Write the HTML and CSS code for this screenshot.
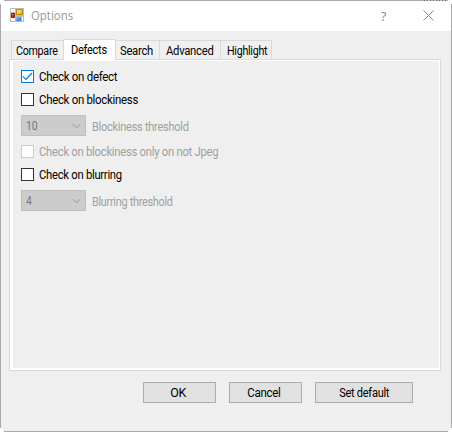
FILE: index.html
```html
<!DOCTYPE html>
<html lang="en">
<head>
<meta charset="utf-8">
<title>Options</title>
<link rel="stylesheet" href="styles.css">
</head>
<body>
<div class="window">
  <header class="titlebar">
    <svg class="app-icon" width="14" height="14" viewBox="0 0 14 14">
      <defs>
        <linearGradient id="y" x1="0" y1="0" x2="1" y2="1"><stop offset="0" stop-color="#ffe99b"/><stop offset="1" stop-color="#eda800"/></linearGradient>
        <linearGradient id="b" x1="0" y1="0" x2="1" y2="1"><stop offset="0" stop-color="#8dbbf5"/><stop offset="1" stop-color="#2d6bd0"/></linearGradient>
      </defs>
      <path d="M0 0H14V14H0Z" fill="#bdbdbd"/>
      <path d="M1 1H5V4H1ZM1 10H5V13H1ZM12 9H13V13H12Z" fill="#fff"/>
      <path d="M1.5 5.5H4.5V9.5H1.5Z" fill="#c8321f" stroke="#a01208"/>
      <path d="M6.5 1.5H12.5V6.5H6.5Z" fill="url(#y)" stroke="#b8860b"/>
      <path d="M6 9H11V13H6Z" fill="url(#b)"/>
      <path d="M2 6H3V7H2Z" fill="#f4a092"/>
    </svg>
    <h1 class="title">Options</h1>
    <span class="help">?</span>
    <svg class="close" width="11" height="11" viewBox="0 0 11 11"><path d="M.5 .5L10.5 10.5M10.5 .5L.5 10.5" fill="none" stroke="#888"/></svg>
  </header>
  <main class="body">
    <nav class="tabs">
      <span class="tab compare"><b class="t1">Compare</b></span>
      <span class="tab active"><b class="t2">Defects</b></span>
      <span class="tab search"><b class="t3">Search</b></span>
      <span class="tab advanced"><b class="t4">Advanced</b></span>
      <span class="tab highlight"><b class="t5">Highlight</b></span>
    </nav>
    <section class="panel">
      <div class="page">
        <label class="check on"><i class="box"><svg width="11" height="11" viewBox="0 0 11 11"><path d="M.8 5.3L4 8.5L10 2" fill="none" stroke="#0078d7" stroke-width="1.2"/></svg></i><span class="c1">Check on defect</span></label>
        <label class="check"><i class="box"></i><span class="c2">Check on blockiness</span></label>
        <div class="row"><span class="combo"><b class="value">10</b><svg width="9" height="6" viewBox="0 0 9 6"><path d="M.5 .8L4.5 4.8L8.5 .8" fill="none" stroke="#999"/></svg></span><span class="hint c3">Blockiness threshold</span></div>
        <label class="check disabled"><i class="box"></i><span class="c4">Check on blockiness only on not Jpeg</span></label>
        <label class="check"><i class="box"></i><span class="c5">Check on blurring</span></label>
        <div class="row"><span class="combo"><b class="value">4</b><svg width="9" height="6" viewBox="0 0 9 6"><path d="M.5 .8L4.5 4.8L8.5 .8" fill="none" stroke="#999"/></svg></span><span class="hint c6">Blurring threshold</span></div>
      </div>
    </section>
    <footer class="actions">
      <button><b class="ok">OK</b></button>
      <button><b class="cancel">Cancel</b></button>
      <button class="wide"><b class="default">Set default</b></button>
    </footer>
  </main>
</div>
</body>
</html>
```
FILE: styles.css
```css
* { box-sizing: border-box; }
body { margin: 0; background: #fff; font: 12px/14px Roboto, sans-serif; color: #000; letter-spacing: -0.3px; }
b, i { font-weight: inherit; font-style: normal; }
b, .check span, .hint { display: inline-block; white-space: nowrap; transform-origin: 0 50%; }
.window {
  width: 452px; height: 432px; padding: 1px;
  background:
    repeating-linear-gradient(90deg, #76685c 0 1px, #b9b3b0 1px 3px, #666a8c 3px 4px, #c9c2b8 4px 6px) 424px 0 / 23px 1px no-repeat,
    linear-gradient(#a9a9a9, #a9a9a9) 4px 0 / 444px 1px no-repeat,
    linear-gradient(#a9a9a9, #a9a9a9) 4px 431px / 444px 1px no-repeat,
    linear-gradient(#a9a9a9, #a9a9a9) 0 4px / 1px 424px no-repeat,
    linear-gradient(#a9a9a9, #a9a9a9) 451px 4px / 1px 424px no-repeat,
    #fff;
}
.titlebar { display: flex; height: 30px; background: #fff; padding: 7px 17px 0 9px; }
.app-icon { display: block; }
.title { margin: 1px auto 0 6.5px; font: 12px/14px "Open Sans", sans-serif; letter-spacing: 0; color: #999; transform: scaleX(.95); transform-origin: 0 50%; }
.help { margin-right: 37px; font: 13px/16px "Open Sans", sans-serif; color: #888; }
.close { margin-top: 2px; }
.body { height: 400px; padding: 8px 10px 0 8px; background: #efefef; border-radius: 0 0 3px 3px; }
.tabs { display: flex; align-items: flex-end; height: 21px; padding-left: 2px; position: relative; z-index: 1; }
.tab { height: 19px; margin-bottom: 1px; border: 1px solid #d9d9d9; border-bottom: 0; border-left-width: 0; background: #f0f0f0; padding: 3px 0 0 4px; white-space: nowrap; }
.compare { width: 52px; border-left-width: 1px; border-right: 0; }
.active { width: 53px; height: 21px; margin-bottom: 0; border-left-width: 1px; background: #fff; padding: 3px 0 0 7px; }
.search { width: 44px; }
.advanced { width: 61px; padding-left: 6px; }
.highlight { width: 51px; padding-left: 6px; }
.panel { width: 432px; height: 312px; margin-top: -1px; border: 1px solid #d9d9d9; background: #fff; padding: 1px 1px 2px 3px; }
.page { height: 307px; background: #efefef; padding: 9px 0 0 8px; }
.check { display: flex; height: 13px; margin-bottom: 10px; }
.box { width: 13px; height: 13px; margin-right: 5px; border: 1px solid #333; background: #fff; }
.box svg { display: block; }
.on .box { border-color: #0078d7; }
.row { display: flex; height: 21px; margin: -1px 0 9px; }
.combo { display: flex; justify-content: space-between; width: 65px; border: 1px solid #bfbfbf; background: #ccc; padding: 3px 4px; color: #777; letter-spacing: 0; }
.combo svg { margin-top: 4px; }
.hint { margin: 5px 0 0 6px; color: #a0a0a0; }
.disabled { color: #a0a0a0; }
.disabled .box { border-color: #ccc; }
.actions { display: flex; gap: 13px; padding: 11px 0 0 134px; }
button { width: 73px; height: 21px; margin: 0; padding: 0; border: 1px solid #adadad; background: #e1e1e1; color: #000; font: inherit; letter-spacing: inherit; }
button b { transform-origin: 50% 50%; }
.wide { width: 98px; }

/* Condensed label widths */
.t1 { transform: scaleX(.89); }
.t2 { transform: scaleX(.92); }
.t3 { transform: scaleX(.94); }
.t4 { transform: scaleX(.94); }
.t5 { transform: scaleX(.89); }
.check .c1 { transform: scaleX(.957); }
.check .c2 { transform: scaleX(.952); }
.c3 { transform: scaleX(.92); }
.check .c4 { transform: scaleX(.943); }
.check .c5 { transform: scaleX(.94); }
.c6 { transform: scaleX(.904); }
.value { transform: scaleX(.87); }
.ok { transform: translateX(-1.5px) scaleX(1.04); }
.cancel { transform: translateX(-1.5px) scaleX(.957); }
.default { transform: scaleX(.92); }
```
